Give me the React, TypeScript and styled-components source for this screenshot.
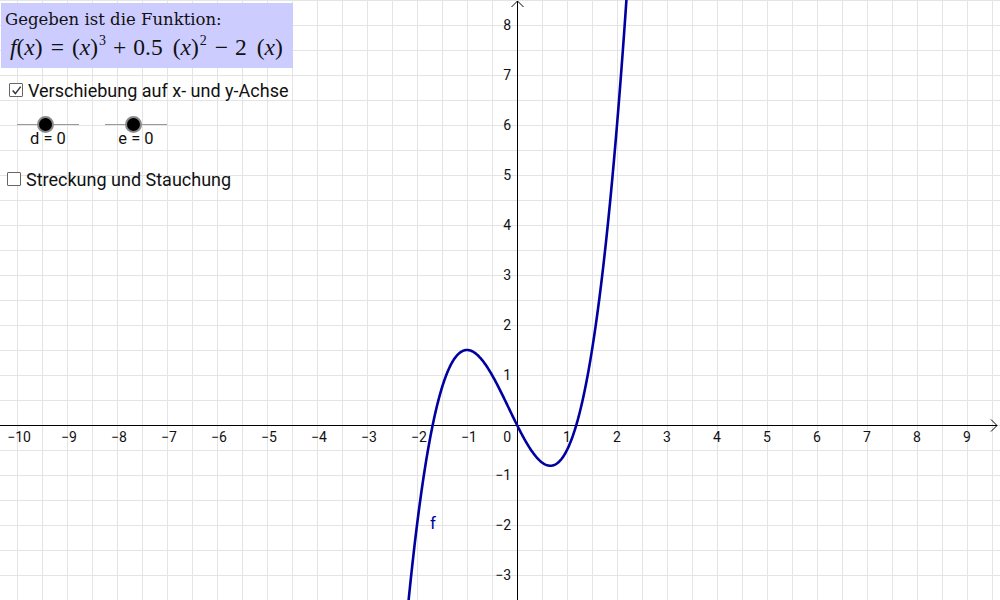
import styled, { createGlobalStyle } from 'styled-components'

const GlobalStyle = createGlobalStyle`
  html, body {
    margin: 0;
    padding: 0;
    background: #ffffff;
  }
  body {
    font-family: Roboto, "Liberation Sans", sans-serif;
  }
`

const W = 1000
const H = 600
const OX = 517
const OY = 425
const UNIT = 50
const CURVE = '#0000a0'

const f = (x: number) => x * x * x + 0.5 * x * x - 2 * x

const Stage = styled.div`
  position: relative;
  width: ${W}px;
  height: ${H}px;
  overflow: hidden;
  background: #ffffff;
`

const Graph = styled.svg`
  display: block;
`

const Overlay = styled.div`
  position: absolute;
  top: 3px;
  left: 1px;
  display: flex;
  flex-direction: column;
  align-items: flex-start;
`

const FormulaBox = styled.div`
  background: #ccccff;
  width: 292px;
  height: 65px;
  box-sizing: border-box;
  padding: 7px 0 0 4px;
  color: #111;
`

const Caption = styled.div`
  font-family: "DejaVu Serif", "Liberation Serif", serif;
  font-size: 16.5px;
  line-height: 20px;
`

const Formula = styled.div`
  margin-top: 3px;
  margin-left: 5px;
  font-family: "Liberation Serif", "DejaVu Serif", serif;
  font-size: 23.5px;
  line-height: 28px;
  white-space: nowrap;

  i {
    font-style: italic;
  }
  sup {
    font-size: 14px;
    vertical-align: 10px;
    line-height: 0;
    margin-left: 1px;
  }
`

const Op = styled.span<{ $l: number; $r: number }>`
  display: inline-block;
  margin-left: ${p => p.$l}px;
  margin-right: ${p => p.$r}px;
`

const CheckRow = styled.label<{ $top: number; $left: number }>`
  display: flex;
  align-items: center;
  gap: 5px;
  margin-top: ${p => p.$top}px;
  margin-left: ${p => p.$left}px;
  font-size: 18px;
  color: #111;
  height: 20px;
`

const Box = styled.span`
  display: inline-flex;
  align-items: center;
  justify-content: center;
  width: 12px;
  height: 12px;
  border: 1px solid #666;
  border-radius: 1px;
  background: #fff;
`

const SliderRow = styled.div`
  display: flex;
  gap: 26px;
  margin-top: 24px;
  margin-left: 16px;
`

const Slider = styled.div`
  display: flex;
  flex-direction: column;
  align-items: center;
  width: 62px;
`

const Track = styled.div`
  position: relative;
  width: 100%;
  height: 1px;
  background: #9a9a9a;
`

const Knob = styled.span`
  position: absolute;
  left: 50%;
  top: 50%;
  width: 13px;
  height: 13px;
  margin: -9px 0 0 -11px;
  border-radius: 50%;
  background: #000;
  border: 2.5px solid #8a8a8a;
`

const SliderLabel = styled.div`
  margin-top: 6px;
  font-size: 16.5px;
  line-height: 16px;
  color: #111;
`

const Check = ({ checked }: { checked: boolean }) => (
  <Box>
    {checked && (
      <svg width="11" height="11" viewBox="0 0 10 10">
        <path d="M1.5 5 L4 7.8 L8.8 1.5" fill="none" stroke="#333" strokeWidth="1.3" />
      </svg>
    )}
  </Box>
)

const minus = (n: number) => (n < 0 ? '\u2212' + Math.abs(n) : String(n))

const curvePath = () => {
  const pts: string[] = []
  for (let x = -2.4; x <= 2.4; x += 0.01) {
    const px = OX + UNIT * x
    const py = OY - UNIT * f(x)
    if (py < -40 || py > H + 40) continue
    pts.push(`${pts.length ? 'L' : 'M'}${px.toFixed(2)} ${py.toFixed(2)}`)
  }
  return pts.join(' ')
}

const GraphView = () => {
  const vLines: number[] = []
  for (let x = OX % 25; x < W; x += 25) vLines.push(x)
  const hLines: number[] = []
  for (let y = OY % 25; y <= H; y += 25) hLines.push(y)

  const xTicks: number[] = []
  for (let k = -10; k <= 9; k++) if (k !== 0) xTicks.push(k)
  const yTicks = [8, 7, 6, 5, 4, 3, 2, 1, -1, -2, -3]

  return (
    <Graph width={W} height={H} viewBox={`0 0 ${W} ${H}`}>
      <g stroke="#e4e4e4" strokeWidth="1" shapeRendering="crispEdges">
        {vLines.map(x => (
          <line key={'v' + x} x1={x + 0.5} y1={0} x2={x + 0.5} y2={H} />
        ))}
        {hLines.map(y => (
          <line key={'h' + y} x1={0} y1={y + 0.5} x2={W} y2={y + 0.5} />
        ))}
      </g>
      <g stroke="#000" strokeWidth="1" fill="none">
        <line x1={0} y1={OY + 0.5} x2={997} y2={OY + 0.5} shapeRendering="crispEdges" />
        <line x1={OX + 0.5} y1={1} x2={OX + 0.5} y2={H} shapeRendering="crispEdges" />
        <path d={`M${OX - 5.5} 7 L${OX + 0.5} 1 L${OX + 6.5} 7`} />
        <path d={`M991 ${OY - 5.5} L997 ${OY + 0.5} L991 ${OY + 6.5}`} />
      </g>
      <g fontFamily="Roboto, 'Liberation Sans', sans-serif" fontSize="14" fill="#111">
        {xTicks.map(k => (
          <text key={'x' + k} x={OX + k * UNIT + (k < 0 ? 2 : 0)} y={OY + 17} textAnchor="middle">
            {minus(k)}
          </text>
        ))}
        <text x={OX - 6} y={OY + 17} textAnchor="end">0</text>
        {yTicks.map(k => (
          <text key={'y' + k} x={OX - 6} y={OY - k * UNIT + 5} textAnchor="end">
            {minus(k)}
          </text>
        ))}
      </g>
      <path d={curvePath()} fill="none" stroke={CURVE} strokeWidth="2.6" strokeLinejoin="round" />
      <text x={430} y={529} fill={CURVE} fontFamily="Roboto, 'Liberation Sans', sans-serif" fontSize="17">
        f
      </text>
    </Graph>
  )
}

export default function App() {
  return (
    <>
      <GlobalStyle />
      <Stage>
        <GraphView />
        <Overlay>
          <FormulaBox>
            <Caption>Gegeben ist die Funktion:</Caption>
            <Formula>
              <i>f</i>(<i>x</i>)
              <Op $l={8} $r={8}>=</Op>
              (<i>x</i>)<sup>3</sup>
              <Op $l={7} $r={7}>+</Op>
              0.5
              <Op $l={10} $r={0} />
              (<i>x</i>)<sup>2</sup>
              <Op $l={8} $r={7}>−</Op>
              2
              <Op $l={10} $r={0} />
              (<i>x</i>)
            </Formula>
          </FormulaBox>
          <CheckRow $top={12} $left={8}>
            <Check checked />
            Verschiebung auf x- und y-Achse
          </CheckRow>
          <SliderRow>
            <Slider>
              <Track>
                <Knob />
              </Track>
              <SliderLabel>d = 0</SliderLabel>
            </Slider>
            <Slider>
              <Track>
                <Knob />
              </Track>
              <SliderLabel>e = 0</SliderLabel>
            </Slider>
          </SliderRow>
          <CheckRow $top={22} $left={6}>
            <Check checked={false} />
            Streckung und Stauchung
          </CheckRow>
        </Overlay>
      </Stage>
    </>
  )
}
